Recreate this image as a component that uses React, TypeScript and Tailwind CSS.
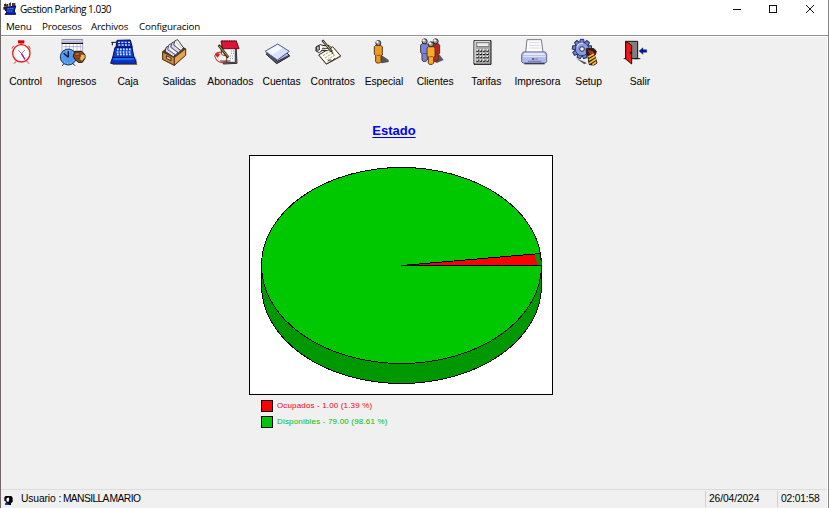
import React from "react";

const spokes = [0, 40, 80, 120, 160, 200, 240, 280, 320];

function Svg({ children }: { children: React.ReactNode }) {
  return (
    <svg width="31" height="31" viewBox="0 0 93 93" className="ml-[6px] block overflow-visible" strokeWidth="3">
      {children}
    </svg>
  );
}

const Control = () => (
  <Svg>
    <path d="M36 10h19v9H36z" fill="#c00" />
    <path d="M44 18h4v6h-4zM23 26l-5 9M68 26l5 9M31 72l-7 8M62 72l7 8" stroke="#e33" fill="none" />
    <circle cx="46" cy="49" r="26" fill="#fff" stroke="#f01818" strokeWidth="4" />
    <circle cx="46" cy="49" r="21" fill="none" stroke="#fbb" strokeWidth="2" strokeDasharray="2 9" />
    <path d="M37 40l9 9 10-9" stroke="#777" fill="none" />
    <path d="M46 49l11 18" stroke="#a0a" strokeWidth="4" />
  </Svg>
);
const Ingresos = () => (
  <Svg>
    <path d="M15 8h62v38H15z" fill="#fff" stroke="#aaa8c8" />
    <path d="M14 8h64" stroke="#777" strokeWidth="2" />
    <path d="M14 19h64" stroke="#111" strokeWidth="4" />
    <path d="M17 13h58" stroke="#b8b8e8" strokeWidth="5" />
    <path d="M17 29h58M27 22v19M38 22v19M49 22v19M60 22v19M70 22v19" stroke="#9996cc" strokeWidth="2" />
    <circle cx="34" cy="60" r="24" fill="#5198eb" stroke="#163563" />
    <circle cx="34" cy="60" r="19" fill="none" stroke="#a4d0ff" strokeDasharray="3 7" />
    <path d="M34 61V43M34 61L20 49" stroke="#101040" strokeWidth="4" />
    <path d="M53 43h21l10 10v11l-8 12H64l-9-8-6-9z" fill="#8b4d25" stroke="#171008" />
    <path d="M54 47h13v8H54zM67 59h14M57 65h12" stroke="#713711" fill="#b67539" />
    <path d="M73 53l10 1v9l-8 8-6-6z" fill="#efb75e" />
    <path d="M20 82l-5 4M48 80l6 6" stroke="#111" />
  </Svg>
);
const Caja = () => (
  <Svg>
    <path d="M12 80h72V62l4 22H15z" fill="#77734e" />
    <path d="M27 10l40-1 6 22H24z" fill="#0828ba" stroke="#001064" />
    <path d="M10 16h16M13 16v9" stroke="#111" />
    <path d="M30 16h36M31 24h34" stroke="#d3eaff" strokeWidth="4" strokeDasharray="6 4" />
    <path d="M21 31h51l6 31H14z" fill="#0c40d2" stroke="#000b65" />
    <path d="M27 37h41M26 45h45M27 52h43" stroke="#e0f0ff" strokeWidth="5" strokeDasharray="5 4" />
    <path d="M14 61h66l4 18H8z" fill="#0835d0" stroke="#000c69" />
    <path d="M16 66h61" stroke="#2284f9" strokeWidth="4" />
  </Svg>
);
const Salidas = () => (
  <Svg>
    <path d="M8 44L48 12l29 25-1 17-33 31-35-18z" fill="#513318" stroke="#38200f" />
    <path d="M15 43l4-13 10-4 19 22-7 12z" fill="#d9d9ec" stroke="#35354a" />
    <path d="M23 38l4-15 10-4 18 23-7 12z" fill="#f4f4ff" stroke="#55556b" />
    <path d="M32 31l4-14 8-3 20 22-8 12z" fill="#d9d9ec" stroke="#44445a" />
    <path d="M41 24l4-13 8-3 17 24-7 9z" fill="#fff" stroke="#444" />
    <path d="M22 31l20 22M31 24l18 22M40 18l17 21M48 13l16 20" stroke="#9696bc" strokeWidth="2" />
    <path d="M8 45l35 17v23L8 67z" fill="#c98b45" stroke="#5c371a" />
    <path d="M43 62l34-27v20L43 85z" fill="#e1a354" stroke="#5c371a" />
    <path d="M19 56l14 7v8l-14-7z" fill="#f7d689" stroke="#482b13" />
  </Svg>
);
const Abonados = () => (
  <Svg>
    <path d="M33 19h42l3 60-41 2z" fill="#777" stroke="#333" />
    <path d="M31 28h42v48H31z" fill="#f8f8ff" stroke="#333" />
    <path d="M30 12h46l8 23H35z" fill="#d91636" stroke="#86001b" />
    <path d="M33 12h44" stroke="#222" strokeDasharray="3 4" />
    <path d="M60 42h12M60 49h10M57 57h14M57 65h13" stroke="#8888ab" strokeDasharray="3 3" />
    <path d="M11 57l5-9 12-3 6 9 13 3v17l-18 3-12-7z" fill="#f5efed" stroke="#c3281d" />
    <path d="M12 53l8-6 7 5-7 10z" fill="#d82118" />
    <path d="M23 24l29 38" stroke="#302f10" strokeWidth="8" />
    <path d="M25 27l27 33" stroke="#a7ae44" strokeWidth="3" />
    <path d="M27 72h31" stroke="#333" />
  </Svg>
);
const Cuentas = () => (
  <Svg>
    <path d="M12 51l42-14 29 20-39 23z" fill="#56566c" stroke="#20202b" />
    <path d="M16 44l38-16 28 27-36 18z" fill="#a9b6ed" stroke="#303045" />
    <path d="M9 43l38-22 35 22-36 26z" fill="#d8e2ff" stroke="#555b85" />
    <path d="M15 43l32-18 14 8-30 20z" fill="#f5f8ff" />
  </Svg>
);
const Contratos = () => (
  <Svg>
    <path d="M20 59l44-25 20 25-44 24z" fill="#85715d" />
    <path d="M17 54l42-25 24 28-43 24z" fill="#fffbe9" stroke="#292929" />
    <path d="M30 56l25-15M36 63l27-17M43 68l26-16" stroke="#9ba1a4" strokeDasharray="7 3" />
    <path d="M9 30l13-7 11 3 15-1 8 8-13 8-15-1-9 7-10-5z" fill="#fff" stroke="#222" />
    <path d="M11 28l8-1v12l-9 1zM27 34h18M24 40h15" fill="#b8c4cb" stroke="#333" />
    <path d="M28 10l29 34" stroke="#202020" strokeWidth="7" />
    <path d="M30 12l24 29" stroke="#d9c84b" strokeWidth="3" />
    <path d="M56 43l5 9M44 72l8-4 4 5 9-9" stroke="#333" fill="none" />
  </Svg>
);

function Person({ x, y, fill }: { x: number; y: number; fill: string }) {
  return (
    <g transform={`translate(${x} ${y})`}>
      <path d="M3 19l4-4h16l4 5v24l-4 3v17l-4 4H10l-3-4V45l-4-3z" fill={fill} stroke="#57351d" />
      <path d="M10 45h12" stroke="#57351d" strokeWidth="2" />
      <circle cx="15" cy="8" r="7.5" fill="#999" stroke="#292929" />
      <circle cx="12" cy="5" r="3.5" fill="#fff" />
    </g>
  );
}
const Especial = () => (
  <Svg>
    <path d="M47 76l5-22 22 15v6l-20 4z" fill="#555" />
    <Person x={28} y={10} fill="#f29a1c" />
  </Svg>
);
const Clientes = () => (
  <Svg>
    <path d="M57 75l12-24 14 18-21 9z" fill="#5b5958" />
    <Person x={44} y={5} fill="#b52525" />
    <Person x={11} y={5} fill="#7483e9" />
    <Person x={30} y={14} fill="#ffaa22" />
  </Svg>
);
const Tarifas = () => (
  <Svg>
    <path d="M21 11h51v71H21z" fill="#a8a8a8" stroke="#111" />
    <path d="M24 78V13h45" fill="none" stroke="#eee" />
    <path d="M29 17h37v12H29z" fill="#ededed" stroke="#777" />
    {[39, 49, 59, 69].map((y) => (
      <g key={y}>
        <path d={`M28 ${y + 2}h39`} stroke="#111" strokeWidth="6" strokeDasharray="7 3" />
        <path d={`M28 ${y}h39`} stroke="#fff" strokeWidth="4" strokeDasharray="5 5" />
      </g>
    ))}
  </Svg>
);
const Impresora = () => (
  <Svg>
    <path d="M27 8h43l5 38H23z" fill="#fff" stroke="#777789" />
    <path d="M33 17h32M33 25h34M32 33h36" stroke="#d5d5df" />
    <path d="M16 45h66l4 7v22l-4 4H15l-4-4V52z" fill="#aeb9ed" stroke="#62678b" />
    <path d="M20 47h58l4 8H16z" fill="#e3e8ff" />
    <path d="M15 59h68" stroke="#e5e8ff" />
    <path d="M19 80h61" stroke="#3b3c4b" strokeWidth="4" />
    <path d="M42 66h7" stroke="#111" />
    <path d="M52 66h8" stroke="#db6545" />
    <path d="M30 73h40" stroke="#6975b4" />
  </Svg>
);
const Setup = () => (
  <Svg>
    <g transform="translate(39 36)">
      {spokes.map((a) => (
        <path key={a} d="M-5-29H5L7-17H-7Z" transform={`rotate(${a})`} fill="#7484c5" stroke="#202a60" />
      ))}
      <circle r="20" fill="#8c9ce0" stroke="#303c78" />
      <path d="M-15-7A17 17 0 0 1 4-17" fill="none" stroke="#d2dcff" strokeWidth="4" />
      <circle r="7" fill="#eee" stroke="#252d54" />
    </g>
    <path d="M52 35h23l7 8-3 10-2 2 7 23-9 6-14-1-5-29-4-8z" fill="#302010" stroke="#28190c" />
    <path d="M56 39l15 4 6 7-14 2z" fill="#b22e2c" />
    <path d="M58 60l17-9M60 69l19-11M61 79l20-13M70 83l12-8" stroke="#ffbd32" strokeWidth="5" />
    <path d="M21 64l33 14-8 4z" fill="#54545b" />
  </Svg>
);
const Salir = () => (
  <Svg>
    <path d="M17 13h36v52H17z" fill="#808080" stroke="#111" />
    <path d="M17 13l18 12v56L17 66z" fill="#ef1818" stroke="#250b0b" />
    <path d="M11 65h7M43 65h18" stroke="#111" />
    <path d="M31 44v7" stroke="#111" />
    <path d="M57 42l12-10v6h11v8H69v6z" fill="#081899" stroke="#030945" strokeWidth="1" />
  </Svg>
);

const tools = [
  { label: "Control", Icon: Control }, { label: "Ingresos", Icon: Ingresos },
  { label: "Caja", Icon: Caja }, { label: "Salidas", Icon: Salidas },
  { label: "Abonados", Icon: Abonados }, { label: "Cuentas", Icon: Cuentas },
  { label: "Contratos", Icon: Contratos }, { label: "Especial", Icon: Especial },
  { label: "Clientes", Icon: Clientes }, { label: "Tarifas", Icon: Tarifas },
  { label: "Impresora", Icon: Impresora }, { label: "Setup", Icon: Setup },
  { label: "Salir", Icon: Salir },
];

function AppLogo() {
  return (
    <svg width="14" height="14" viewBox="0 0 42 42">
      <path d="M3 6h12v8H3zM17 5l7-4v10h-7zM27 3h10v10H27z" fill="#333" />
      <path d="M7 4l5 5M29 4l6 5" stroke="#d33" strokeWidth="3" />
      <path d="M8 16l30-4-4 15 4 10H6l7-8-6-3z" fill="#0a28ba" stroke="#00083f" strokeWidth="3" />
      <path d="M14 20h19M13 27h18" stroke="#88aeff" strokeWidth="3" strokeDasharray="3 3" />
      <path d="M1 15h10v8H1z" fill="#222" />
    </svg>
  );
}

function StateChart() {
  return (
    <div className="h-[240px] w-[304px] border border-black bg-white">
      <svg width="302" height="238" viewBox="250 156 302 238" shapeRendering="crispEdges" stroke="#000" strokeWidth="1">
        <path d="M261.5 265.5v20a140 98 0 0 0 280 0v-20z" fill="#009800" />
        <ellipse cx="401.5" cy="265.5" rx="140" ry="98" fill="#00c800" />
        <path d="M401.5 265.5L540.5 253.5L541.5 265.5Z" fill="#f00" />
        <path d="M534 254l6 0 1 11h-3z" fill="#009800" stroke="none" />
        <path d="M401.5 265.5L540.5 253.5M401.5 265.5H541.5" fill="none" />
        <path d="M541.5 261v4" stroke="#f00" />
      </svg>
    </div>
  );
}

export default function App() {
  return (
    <main className="flex h-[508px] w-[829px] flex-col overflow-hidden border-x border-l-[#6f6867] border-r-[#858585] bg-[#f0f0f0] font-['Liberation_Sans',Arial,sans-serif] text-black">
      <header className="h-[36px] shrink-0 border-b border-[#929292] bg-white font-['Open_Sans','Noto_Sans',sans-serif]">
        <div className="flex h-[18px] items-center pl-[2px]">
          <AppLogo />
          <h1 className="ml-[3px] text-[10px] leading-none tracking-[-0.5px]">Gestion Parking 1.030</h1>
          <svg className="ml-auto mr-[12px]" width="84" height="18" fill="none" stroke="#111" shapeRendering="crispEdges">
            <path d="M1 9.5h8M37.5 5.5h7v7h-7z" />
            <path d="M74 5l8 8M82 5l-8 8" shapeRendering="auto" />
          </svg>
        </div>
        <nav className="flex h-[18px] items-center text-[9.8px] leading-none tracking-[-0.2px]">
          <span className="w-[36px] pl-[5px]">Menu</span>
          <span className="w-[49px] pl-[5px]">Procesos</span>
          <span className="w-[48px] pl-[5px]">Archivos</span>
          <span className="pl-[5px]">Configuracion</span>
        </nav>
      </header>

      <div className="flex min-h-0 flex-1 flex-col border-r border-white">
        <div className="flex h-[55px] shrink-0 border-t border-white">
          {tools.map(({ label, Icon }) => (
            <button key={label} className="-ml-px mr-px flex w-[51.2px] shrink-0 flex-col">
              <Icon />
              <span className="mt-[8px] w-full whitespace-nowrap text-center text-[10.3px] leading-[12px] tracking-[-0.05px]">{label}</span>
            </button>
          ))}
        </div>

        <section className="ml-[248px] mt-[32px] w-[304px] flex-1">
          <h2 className="pr-[14px] text-center text-[13px] leading-[16px] font-bold text-[#0000f0] underline underline-offset-2">Estado</h2>
          <div className="mt-[16px]"><StateChart /></div>
          <div className="ml-[12px] mt-[5px] flex flex-col gap-[4px] text-[8px] leading-[12px]">
            <div className="flex items-center gap-[4px] text-[#f00020]">
              <span className="h-[12px] w-[12px] border border-black bg-[#f00]" />
              <span className="tracking-[0.15px]">Ocupados - 1.00 (1.39 %)</span>
            </div>
            <div className="flex items-center gap-[4px] text-[#00be00]">
              <span className="h-[12px] w-[12px] border border-black bg-[#00c800]" />
              <span className="tracking-[0.18px]">Disponibles - 79.00 (98.61 %)</span>
            </div>
          </div>
        </section>

        <footer className="flex h-[19px] shrink-0 items-center border-t border-[#dcdcdc] text-[10.3px] leading-none tracking-[-0.12px]">
          <svg className="ml-[3px] mt-[3px]" width="9" height="11" viewBox="0 0 27 33">
            <path d="M5 3h17l4 5v12l-5 5v5H4v-6l4-3-7-4V7z" />
            <path d="M7 11l6-4 3 5-3 10-5-4z" fill="#fff" />
            <path d="M2 30l7-7 8 7z" fill="#2030d0" />
          </svg>
          <span className="ml-[8px] mt-px whitespace-pre">Usuario : </span>
          <span className="-ml-px mt-px tracking-[-0.62px] [word-spacing:-0.9px]">MANSILLA MARIO</span>
          <span className="ml-auto flex h-[16px] w-[72px] items-center border-l border-[#d0d0d0] pl-[3px] pt-px">26/04/2024</span>
          <span className="flex h-[16px] w-[50px] items-center border-l border-[#d0d0d0] pl-[3px] pt-px tracking-[-0.2px]">02:01:58</span>
        </footer>
      </div>
    </main>
  );
}
